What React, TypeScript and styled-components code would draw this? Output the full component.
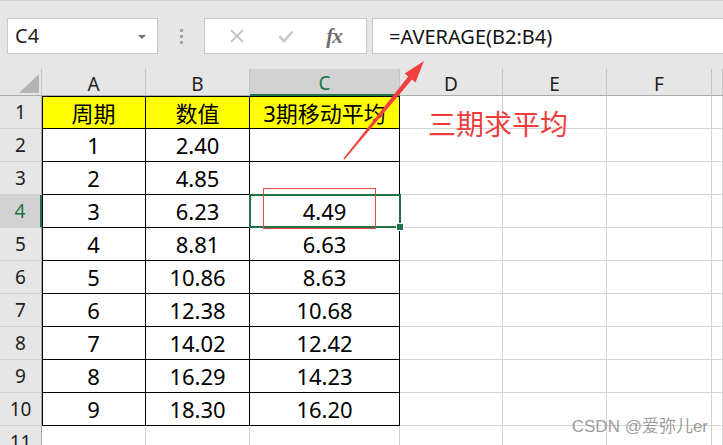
import React, { ReactElement } from "react"
import styled, { createGlobalStyle } from "styled-components"

// ************
// data
// ************

const COLUMNS = ["A", "B", "C", "D", "E", "F", ""]
const ACTIVE_COL = 2
const ACTIVE_ROW = 4

const TABLE: string[][] = [
	["周期", "数值", "3期移动平均"],
	["1", "2.40", ""],
	["2", "4.85", ""],
	["3", "6.23", "4.49"],
	["4", "8.81", "6.63"],
	["5", "10.86", "8.63"],
	["6", "12.38", "10.68"],
	["7", "14.02", "12.42"],
	["8", "16.29", "14.23"],
	["9", "18.30", "16.20"],
	["", "", ""],
]

const GREEN = "#217346"

// ************
// component
// ************

export default function App(): ReactElement {
	return (
		<Page>
			<GlobalStyle />
			<FormulaBar>
				<NameBox>
					C4
					<Caret />
				</NameBox>
				<Dots>
					<i />
					<i />
					<i />
				</Dots>
				<ButtonBox>
					<ToolIcon viewBox="0 0 16 16">
						<path d="M2 2 L14 14 M14 2 L2 14" stroke="#c4c4c4" strokeWidth="1.8" fill="none" />
					</ToolIcon>
					<ToolIcon viewBox="0 0 16 16">
						<path d="M1.5 8.5 L6 13 L14.5 3.5" stroke="#c8c8c8" strokeWidth="2.6" fill="none" />
					</ToolIcon>
					<Fx>fx</Fx>
				</ButtonBox>
				<FormulaInput>=AVERAGE(B2:B4)</FormulaInput>
			</FormulaBar>

			<Sheet>
				<Corner>
					<svg width="42" height="27" viewBox="0 0 42 27">
						<polygon points="19,24 39,24 39,5" fill="#b4b4b4" />
					</svg>
				</Corner>
				{COLUMNS.map((c, i) => (
					<ColHead key={c + i} $active={i === ACTIVE_COL}>
						{c}
					</ColHead>
				))}

				{TABLE.map((row, r) => {
					const rowNo = r + 1
					const inTable = rowNo <= 10
					return (
						<React.Fragment key={rowNo}>
							<RowHead $active={rowNo === ACTIVE_ROW}>{rowNo}</RowHead>
							{COLUMNS.map((_, c) => {
								const isTable = inTable && c < 3
								const isActive = rowNo === ACTIVE_ROW && c === ACTIVE_COL
								return (
									<Cell
										key={c}
										$table={isTable}
										$fill={rowNo === 1 && c < 3}
										$left={isTable && c === 0}
										$top={isTable && rowNo === 1}
									>
										{c < 3 ? row[c] : ""}
										{isActive && (
											<ActiveFrame>
												<FillHandle />
											</ActiveFrame>
										)}
									</Cell>
								)
							})}
						</React.Fragment>
					)
				})}
			</Sheet>

			{/* annotations drawn over the sheet */}
			<RedBox />
			<ArrowLayer viewBox="0 0 723 445">
				<polygon
					points="343.4,158.5 408.2,76.5 404.7,73.6 424,61 415.5,82.5 412,79.6 344.6,159.5"
					fill="#f0413f"
				/>
			</ArrowLayer>
			<Note>三期求平均</Note>
			<Watermark>CSDN @爱弥儿er</Watermark>
		</Page>
	)
}

// ************
// styles
// ************

const GlobalStyle = createGlobalStyle`
	html, body {
		margin: 0;
		padding: 0;
		background: #fff;
		overflow: hidden;
	}
	body {
		font-family: "Noto Sans", "Noto Sans CJK SC", sans-serif;
		color: #000;
	}
`
const Page = styled.div`
	position: relative;
	width: 723px;
	height: 445px;
	overflow: hidden;
`
const FormulaBar = styled.div`
	display: flex;
	align-items: flex-start;

	height: 69px;
	padding: 17px 0 0 7px;
	box-sizing: border-box;
	border-top: 1px solid #d6d6d6;

	background: #e6e6e6;
`
const NameBox = styled.div`
	position: relative;
	display: flex;
	align-items: center;

	width: 151px;
	height: 36px;
	padding-left: 7px;
	box-sizing: border-box;
	border: 1px solid #c9c9c9;

	background: #fff;
	color: #222;
	font-size: 20px;
	line-height: 1;
`
const Caret = styled.span`
	position: absolute;
	right: 11px;
	top: 16px;
	width: 0;
	height: 0;
	border-left: 4px solid transparent;
	border-right: 4px solid transparent;
	border-top: 4px solid #707070;
`
const Dots = styled.div`
	display: flex;
	flex-direction: column;
	align-items: center;
	justify-content: center;
	gap: 3px;

	width: 46px;
	height: 36px;

	i {
		display: block;
		width: 3px;
		height: 3px;
		background: #a4a4a4;
	}
`
const ButtonBox = styled.div`
	display: flex;
	align-items: center;
	justify-content: space-around;

	width: 163px;
	height: 36px;
	padding: 0 8px;
	box-sizing: border-box;
	border: 1px solid #c9c9c9;

	background: #fff;
`
const ToolIcon = styled.svg`
	width: 16px;
	height: 16px;
`
const Fx = styled.span`
	font-family: "Liberation Serif", serif;
	font-style: italic;
	font-weight: bold;
	font-size: 21px;
	color: #6e6e6e;
	letter-spacing: -1px;
`
const FormulaInput = styled.div`
	display: flex;
	align-items: center;
	flex: 1;

	height: 36px;
	margin-left: 5px;
	padding-left: 16px;
	box-sizing: border-box;
	border: 1px solid #c9c9c9;
	border-right: none;

	background: #fff;
	color: #111;
	font-size: 20px;
`
const Sheet = styled.div`
	display: grid;
	grid-template-columns: 42px 104px 104px 150px 103px 104px 105px 1fr;
	grid-template-rows: 27px repeat(11, 33px);

	> div {
		box-sizing: border-box;
	}
`
const Corner = styled.div`
	border-right: 1px solid #c4c4c4;
	border-bottom: 1px solid #ababab;
	background: #e6e6e6;

	svg {
		display: block;
	}
`
const ColHead = styled.div<{ $active?: boolean }>`
	display: flex;
	align-items: center;
	justify-content: center;

	padding-top: 3px;
	border-right: 1px solid #c4c4c4;
	border-bottom: ${({ $active }) => ($active ? `2px solid ${GREEN}` : "1px solid #ababab")};

	background: ${({ $active }) => ($active ? "#d2d2d2" : "#e6e6e6")};
	color: ${({ $active }) => ($active ? GREEN : "#1f1f1f")};
	font-size: 19px;
`
const RowHead = styled.div<{ $active?: boolean }>`
	display: flex;
	align-items: center;
	justify-content: center;

	border-right: ${({ $active }) => ($active ? `2px solid ${GREEN}` : "1px solid #ababab")};
	border-bottom: 1px solid #d0d0d0;

	background: ${({ $active }) => ($active ? "#d2d2d2" : "#e6e6e6")};
	color: ${({ $active }) => ($active ? GREEN : "#1f1f1f")};
	font-size: 19px;
`
const Cell = styled.div<{ $table?: boolean; $fill?: boolean; $left?: boolean; $top?: boolean }>`
	position: relative;
	display: flex;
	align-items: center;
	justify-content: center;

	border-right: 1px solid ${({ $table }) => ($table ? "#000" : "#d4d4d4")};
	border-bottom: 1px solid ${({ $table }) => ($table ? "#000" : "#d4d4d4")};
	box-shadow: ${({ $left, $top }) =>
		[$left && "inset 1px 0 0 #000", $top && "inset 0 1px 0 #000"].filter(Boolean).join(", ") || "none"};

	background: ${({ $fill }) => ($fill ? "#ffff00" : "#fff")};
	color: #000;
	font-size: 22px;
	white-space: nowrap;
`
const ActiveFrame = styled.span`
	position: absolute;
	z-index: 2;
	top: -1px;
	left: -1px;
	right: -2px;
	bottom: -1px;
	border: 2px solid ${GREEN};
	pointer-events: none;
`
const FillHandle = styled.span`
	position: absolute;
	right: -5px;
	bottom: -5px;
	width: 6px;
	height: 6px;
	border: 1px solid #fff;
	background: ${GREEN};
`
const RedBox = styled.div`
	position: absolute;
	z-index: 3;
	left: 263px;
	top: 188px;
	width: 113px;
	height: 41px;
	box-sizing: border-box;
	border: 1px solid #f04848;
	pointer-events: none;
`
const ArrowLayer = styled.svg`
	position: absolute;
	z-index: 3;
	left: 0;
	top: 0;
	width: 723px;
	height: 445px;
	pointer-events: none;
`
const Note = styled.div`
	position: absolute;
	z-index: 3;
	left: 428px;
	top: 109px;

	color: #f03c3c;
	font-family: "Noto Sans CJK SC", sans-serif;
	font-size: 28px;
	line-height: 28px;
	white-space: nowrap;
`
const Watermark = styled.div`
	position: absolute;
	z-index: 3;
	right: 15px;
	top: 417px;

	color: rgba(130, 130, 130, 0.8);
	font-family: "Liberation Sans", "Noto Sans CJK SC", sans-serif;
	font-size: 17px;
	line-height: 19px;
	white-space: nowrap;
`
